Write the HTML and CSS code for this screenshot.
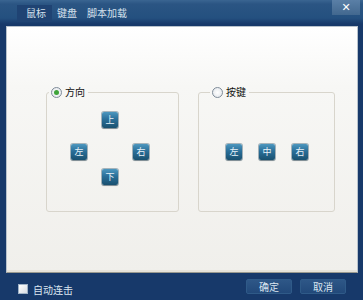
FILE: index.html
```html
<!DOCTYPE html>
<html lang="zh-CN">
<head>
  <meta charset="UTF-8">
  <title>鼠标设置</title>
  <link rel="stylesheet" href="styles.css">
</head>
<body>
  <div class="window">
    <div class="titlebar">
      <div class="tabs">
        <span class="tab active">鼠标</span>
        <span class="tab">键盘</span>
        <span class="tab">脚本加载</span>
      </div>
      <span class="close">✕</span>
    </div>

    <div class="panel">
      <div class="groups">
        <fieldset class="group group-dir">
          <legend><span class="radio checked"></span>方向</legend>
          <div class="dir-pad">
            <span class="key up">上</span>
            <span class="key left">左</span>
            <span class="key right">右</span>
            <span class="key down">下</span>
          </div>
        </fieldset>
        <fieldset class="group group-btn">
          <legend><span class="radio"></span>按键</legend>
          <div class="btn-row">
            <span class="key">左</span>
            <span class="key">中</span>
            <span class="key">右</span>
          </div>
        </fieldset>
      </div>
    </div>

    <div class="footer">
      <label class="auto"><span class="check"></span>自动连击</label>
      <div class="actions">
        <button class="btn">确定</button>
        <button class="btn">取消</button>
      </div>
    </div>
  </div>
</body>
</html>
```

FILE: styles.css
```css
body {
  margin: 0;
  font-family: "Noto Sans CJK SC", "Noto Sans", sans-serif;
  font-size: 10px;
}
.window {
  width: 363px;
  height: 300px;
  overflow: hidden;
  display: flex;
  flex-direction: column;
  background: #17396a;
}
.titlebar {
  height: 26px;
  display: flex;
  align-items: flex-start;
  background: linear-gradient(#3a6591 0, #2b5583 4px, #24507f 18px, #17396a 24px);
}
.tabs {
  display: flex;
  padding: 5px 0 0 17px;
}
.tab {
  height: 17px;
  line-height: 16px;
  padding: 0 5px;
  color: #d4e0ec;
}
.tab.active {
  padding: 0 6px 0 9px;
  background: #1f4373;
}
.close {
  margin-left: auto;
  margin-right: 3px;
  width: 28px;
  height: 15px;
  line-height: 15px;
  text-align: center;
  color: #fff;
  font-family: "DejaVu Sans", sans-serif;
  font-size: 11px;
  font-weight: bold;
  background: linear-gradient(#5a7fa6, #42688f);
}
.panel {
  height: 245px;
  margin: 0 5px 0 6px;
  border: 1px solid #b8c2cc;
  border-bottom-color: #9a9a90;
  background: linear-gradient(#ffffff 0, #f7f7f5 60px, #f0efeb 100%);
  box-shadow: inset 0 -2px 0 #e6e3da;
}
.groups {
  display: flex;
  padding: 58px 0 0 39px;
  gap: 19px;
}
.group {
  margin: 0;
  padding: 0;
  height: 125px;
  border: 1px solid #d8d5cc;
  border-radius: 3px;
}
.group legend {
  display: flex;
  align-items: center;
  gap: 3px;
  padding: 0 3px 0 2px;
  color: #111;
  line-height: 14px;
}
.group-dir {
  width: 131px;
}
.group-dir legend {
  margin-left: 2px;
}
.group-btn {
  width: 135px;
}
.group-btn legend {
  margin-left: 11px;
}
.radio {
  width: 9px;
  height: 9px;
  border: 1px solid #7f8c99;
  border-radius: 50%;
  background: radial-gradient(#ffffff, #dfe3e8);
  position: relative;
}
.radio.checked::after {
  content: "";
  position: absolute;
  left: 2px;
  top: 2px;
  width: 5px;
  height: 5px;
  border-radius: 50%;
  background: #3fa43a;
}
.key {
  width: 16px;
  height: 16px;
  line-height: 16px;
  text-align: center;
  font-size: 9px;
  color: #e8f2f8;
  border-radius: 2px;
  background: linear-gradient(#4d97bf 0, #2a6f99 45%, #19506f 100%);
  box-shadow: 0 0 0 1px rgba(20, 60, 85, 0.35), 0 1px 1px rgba(0, 0, 0, 0.25);
}
.dir-pad {
  display: grid;
  grid-template-columns: 16px 16px 16px;
  grid-template-rows: 16px 16px 16px 9px 16px;
  column-gap: 15px;
  padding: 13px 0 0 24px;
}
.dir-pad .up { grid-column: 2; grid-row: 1; }
.dir-pad .left { grid-column: 1; grid-row: 3; }
.dir-pad .right { grid-column: 3; grid-row: 3; }
.dir-pad .down { grid-column: 2; grid-row: 5; }
.btn-row {
  display: flex;
  gap: 17px;
  padding: 45px 0 0 27px;
}
.footer {
  flex: 1;
  display: flex;
  align-items: center;
  padding: 0 17px 0 18px;
}
.auto {
  display: flex;
  align-items: center;
  gap: 5px;
  color: #dbe6f0;
  margin-top: 5px;
}
.check {
  width: 8px;
  height: 8px;
  background: linear-gradient(135deg, #ffffff, #d8dde4);
  border: 1px solid #9fb2c6;
}
.actions {
  margin-left: auto;
  display: flex;
  gap: 8px;
}
.btn {
  width: 46px;
  height: 15px;
  padding: 0;
  font-family: inherit;
  font-size: 10px;
  line-height: 13px;
  color: #dbe6f0;
  border: 1px solid #2f5a88;
  border-radius: 2px;
  background: linear-gradient(#2e5787, #22497a);
}
```
